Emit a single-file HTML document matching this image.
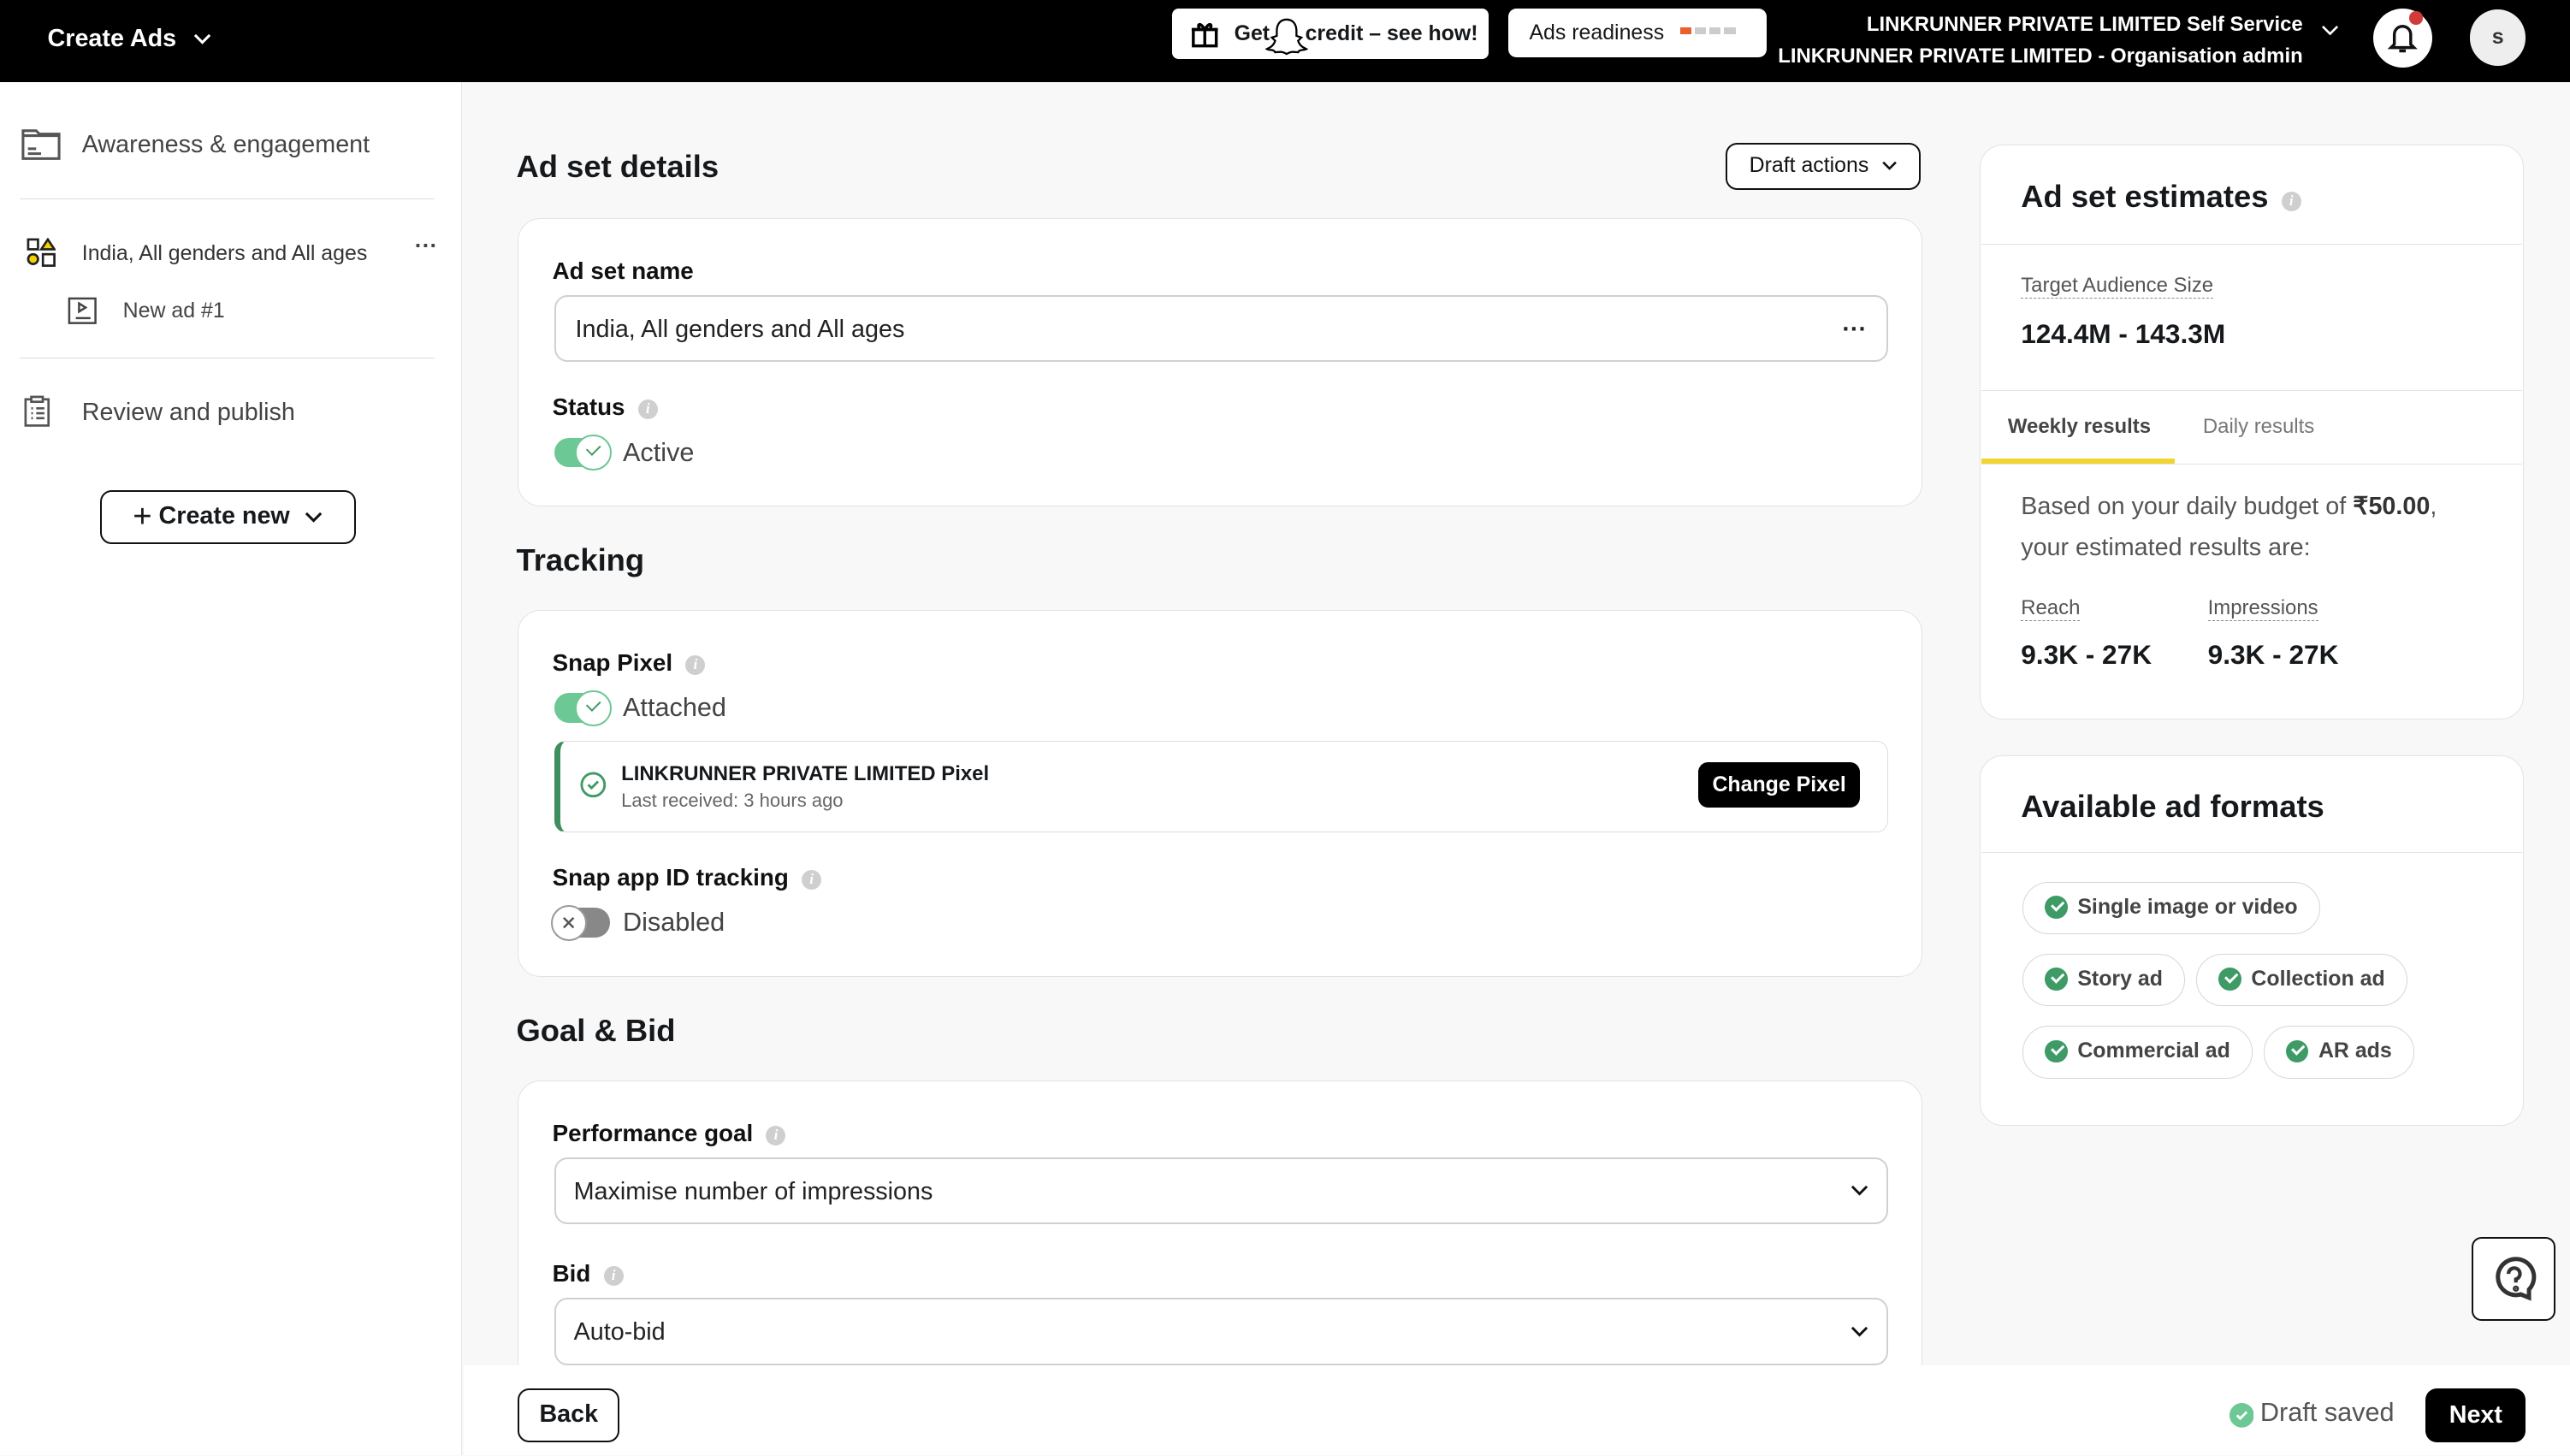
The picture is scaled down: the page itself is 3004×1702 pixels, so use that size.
<!DOCTYPE html>
<html><head><meta charset="utf-8"><style>
*{box-sizing:border-box;margin:0;padding:0}
html,body{width:3004px;height:1702px;overflow:hidden;background:#f8f8f8}
#w{zoom:1.91582;width:1568px;height:888px;position:relative;font-family:"Liberation Sans",sans-serif;color:#16191c}
.a{position:absolute}
.top{left:0;top:0;width:1568px;height:50px;background:#000}
.side{left:0;top:50px;width:282px;height:838px;background:#fff;border-right:1px solid #e5e5e5}
.card{position:absolute;background:#fff;border:1px solid #e3e3e3;border-radius:14px}
.h{font-weight:bold;font-size:19px}
.lbl{font-weight:bold;font-size:14.5px;color:#111}
.info{display:inline-block;width:12px;height:12px;border-radius:50%;background:#cfcfcf;color:#fff;font-size:9px;text-align:center;line-height:12px;font-style:italic;font-family:"Liberation Serif",serif;font-weight:bold;vertical-align:1px;margin-left:8px}
.inp{position:absolute;border:1.5px solid #d0d0d0;border-radius:8px;background:#fff;font-size:15px;color:#222}
.tog{position:absolute;width:34px;height:18px;border-radius:9px;background:#6cc894}
.knob{position:absolute;width:22px;height:22px;border-radius:50%;background:#fff;border:1.5px solid #6cc894}
.knob::after{content:"";position:absolute;left:6px;top:5px;width:7px;height:4px;border-left:1.4px solid #3e9b65;border-bottom:1.4px solid #3e9b65;transform:rotate(-45deg)}
.chip{position:absolute;height:32px;border:1px solid #d6d6d6;border-radius:16px;font-size:13px;font-weight:bold;color:#444;padding:0 13px 0 33px;line-height:30px}
.chip::before{content:"";position:absolute;left:13px;top:8px;width:14px;height:14px;border-radius:50%;background:#3e9b65}
.chip::after{content:"";position:absolute;left:17px;top:11px;width:6px;height:3px;border-left:1.6px solid #fff;border-bottom:1.6px solid #fff;transform:rotate(-45deg)}
.dash{border-bottom:1px dashed #888;display:inline-block;line-height:14px}
.btn{position:absolute;border:1.5px solid #111;border-radius:7px;background:#fff;font-weight:bold;font-size:14.5px;text-align:center}
.chev{display:inline-block;vertical-align:middle}
</style></head><body><div id="w">
<div class="a top"></div>
<div class="a" style="left:29px;top:15px;color:#fff;font-weight:bold;font-size:15px">Create Ads <svg class="chev" style="margin-left:6px" width="11" height="7" viewBox="0 0 11 7" fill="none" stroke="#fff" stroke-width="1.6"><path d="M1 1l4.5 4.5L10 1"/></svg></div>
<div class="a" style="left:715px;top:5px;width:193px;height:31px;background:#fff;border-radius:4px;font-weight:bold;font-size:13px;line-height:31px;padding-left:38px">Get&nbsp;&nbsp;&nbsp;&nbsp;&nbsp;&nbsp;credit – see how!</div>
<svg class="a" style="left:726px;top:12px" width="18" height="18" viewBox="0 0 18 18" fill="none" stroke="#000" stroke-width="1.8"><rect x="2" y="6" width="14" height="10"/><path d="M1 6h16M9 6v10M9 6C6 1 4 3 6 6M9 6c3-5 5-3 3 0"/></svg>
<svg class="a" style="left:772px;top:10px" width="26" height="26" viewBox="0 0 26 26"><path d="M13 2c4 0 6 3 6 7v3l3 1-2 2c1 3 3 4 5 5-2 1-4 0-5 2-2 0-4-1-7 1-3-2-5-1-7-1-1-2-3-1-5-2 2-1 4-2 5-5l-2-2 3-1V9c0-4 2-7 6-7z" fill="#fff" stroke="#000" stroke-width="1.2"/></svg>
<div class="a" style="left:920px;top:5px;width:158px;height:30px;background:#fff;border-radius:5px;font-size:13px;line-height:30px;padding-left:13px">Ads readiness <span style="display:inline-block;width:7px;height:4px;background:#e8602a;margin-left:6px;vertical-align:3px"></span><span style="display:inline-block;width:7px;height:4px;background:#ccc;margin-left:2px;vertical-align:3px"></span><span style="display:inline-block;width:7px;height:4px;background:#ccc;margin-left:2px;vertical-align:3px"></span><span style="display:inline-block;width:7px;height:4px;background:#ccc;margin-left:2px;vertical-align:3px"></span></div>
<div class="a" style="right:163px;top:6px;color:#fff;font-weight:bold;font-size:12.5px;text-align:right;line-height:19px">LINKRUNNER PRIVATE LIMITED Self Service<br>LINKRUNNER PRIVATE LIMITED - Organisation admin</div>
<svg class="a" style="left:1416px;top:15px" width="11" height="7" viewBox="0 0 11 7" fill="none" stroke="#fff" stroke-width="1.4"><path d="M1 1l4.5 4.5L10 1"/></svg>
<div class="a" style="left:1448px;top:5px;width:36px;height:36px;border-radius:50%;background:#fff"></div>
<svg class="a" style="left:1457px;top:13px" width="18" height="20" viewBox="0 0 18 20" fill="none" stroke="#111" stroke-width="1.8"><path d="M4 14V8a5 5 0 0 1 10 0v6l2 2H2zM7 18h4"/></svg>
<div class="a" style="left:1470px;top:7px;width:8px;height:8px;border-radius:50%;background:#d33b3b"></div>
<div class="a" style="left:1507px;top:6px;width:34px;height:34px;border-radius:50%;background:#eee;text-align:center;line-height:34px;font-weight:bold;font-size:13px;color:#333">s</div>

<div class="a side"></div>
<svg class="a" style="left:13px;top:78px" width="24" height="20" viewBox="0 0 24 20" fill="none" stroke="#555" stroke-width="1.6"><path d="M1 2h8l2 2h12v15H1zM1 5h22M4 13h5M4 16h8"/></svg>
<div class="a" style="left:50px;top:80px;font-size:15px;color:#444">Awareness &amp; engagement</div>
<div class="a" style="left:12px;top:121px;width:253px;border-top:1px solid #ddd"></div>
<svg class="a" style="left:16px;top:145px" width="18" height="18" viewBox="0 0 18 18" fill="none" stroke="#222" stroke-width="1.4"><rect x="1" y="1" width="6" height="6"/><path d="M13 1l4 6h-8z" fill="#f2d200"/><circle cx="4" cy="13" r="3" fill="#f2d200"/><rect x="10" y="10" width="7" height="7"/></svg>
<div class="a" style="left:50px;top:147px;font-size:13px;color:#333">India, All genders and All ages</div>
<div class="a" style="left:253px;top:142px;font-size:14px;font-weight:bold;color:#444">···</div>
<svg class="a" style="left:41px;top:181px" width="18" height="17" viewBox="0 0 18 17" fill="none" stroke="#444" stroke-width="1.3"><rect x="1" y="1" width="16" height="15"/><path d="M7 4v5l4-2.5zM5 13h9"/></svg>
<div class="a" style="left:75px;top:182px;font-size:13px;color:#444">New ad #1</div>
<div class="a" style="left:12px;top:218px;width:253px;border-top:1px solid #ddd"></div>
<svg class="a" style="left:14px;top:241px" width="18" height="20" viewBox="0 0 18 20" fill="none" stroke="#555" stroke-width="1.4"><rect x="1.5" y="2.5" width="14" height="16"/><rect x="5" y="1" width="7" height="3" fill="#fff"/><path d="M5 8h1M8 8h5M5 11h1M8 11h5M5 14h1M8 14h5"/></svg>
<div class="a" style="left:50px;top:243px;font-size:15px;color:#444">Review and publish</div>
<div class="btn" style="left:61px;top:299px;width:156px;height:33px;line-height:30px;font-size:15px"><span style="font-size:20px;font-weight:normal;vertical-align:-2px">+</span> Create new <svg class="chev" style="margin-left:5px" width="11" height="7" viewBox="0 0 11 7" fill="none" stroke="#111" stroke-width="1.6"><path d="M1 1l4.5 4.5L10 1"/></svg></div>

<div class="a h" style="left:315px;top:91px">Ad set details</div>
<div class="btn" style="left:1053px;top:87px;width:119px;height:29px;line-height:26px;font-size:13px;font-weight:normal;color:#111">Draft actions <svg class="chev" style="margin-left:4px" width="10" height="6" viewBox="0 0 11 7" fill="none" stroke="#111" stroke-width="1.6"><path d="M1 1l4.5 4.5L10 1"/></svg></div>
<div class="card" style="left:316px;top:133px;width:857px;height:176px"></div>
<div class="a lbl" style="left:337px;top:157px">Ad set name</div>
<div class="inp" style="left:338px;top:180px;width:814px;height:41px;padding:12px 12px;line-height:16px">India, All genders and All ages<span style="float:right;font-weight:bold">···</span></div>
<div class="a lbl" style="left:337px;top:240px">Status<span class="info">i</span></div>
<div class="tog" style="left:338px;top:267px"></div><div class="knob" style="left:351px;top:265px"></div>
<div class="a" style="left:380px;top:267px;font-size:16px;color:#444">Active</div>

<div class="a h" style="left:315px;top:331px">Tracking</div>
<div class="card" style="left:316px;top:372px;width:857px;height:224px"></div>
<div class="a lbl" style="left:337px;top:396px">Snap Pixel<span class="info">i</span></div>
<div class="tog" style="left:338px;top:423px"></div><div class="knob" style="left:351px;top:421px"></div>
<div class="a" style="left:380px;top:423px;font-size:16px;color:#444">Attached</div>
<div class="a" style="left:338px;top:452px;width:814px;height:56px;border:1px solid #ddd;border-left:4px solid #3e8e5e;border-radius:7px;background:#fff"></div>
<svg class="a" style="left:354px;top:471px" width="16" height="16" viewBox="0 0 16 16" fill="none" stroke="#3e9b65" stroke-width="1.5"><circle cx="8" cy="8" r="7"/><path d="M5 8l2 2 4-4"/></svg>
<div class="a" style="left:379px;top:465px;font-size:12.5px;font-weight:bold">LINKRUNNER PRIVATE LIMITED Pixel</div>
<div class="a" style="left:379px;top:482px;font-size:11.5px;color:#666">Last received: 3 hours ago</div>
<div class="a" style="left:1036px;top:465px;width:99px;height:28px;background:#000;color:#fff;border-radius:6px;font-size:13px;font-weight:bold;text-align:center;line-height:28px">Change Pixel</div>
<div class="a lbl" style="left:337px;top:527px">Snap app ID tracking<span class="info">i</span></div>
<div class="a" style="left:338px;top:554px;width:34px;height:18px;border-radius:9px;background:#888"></div>
<div class="a" style="left:336px;top:552px;width:22px;height:22px;border-radius:50%;background:#fff;border:1.5px solid #999"></div>
<svg class="a" style="left:343px;top:559px" width="8" height="8" viewBox="0 0 8 8" stroke="#555" stroke-width="1.3"><path d="M1 1l6 6M7 1L1 7"/></svg>
<div class="a" style="left:380px;top:554px;font-size:16px;color:#444">Disabled</div>

<div class="a h" style="left:315px;top:618px">Goal &amp; Bid</div>
<div class="card" style="left:316px;top:659px;width:857px;height:200px"></div>
<div class="a lbl" style="left:337px;top:683px">Performance goal<span class="info">i</span></div>
<div class="inp" style="left:338px;top:706px;width:814px;height:41px;padding:12px 11px;line-height:16px">Maximise number of impressions<svg style="float:right;margin-top:4px" width="11" height="7" viewBox="0 0 11 7" fill="none" stroke="#111" stroke-width="1.5"><path d="M1 1l4.5 4.5L10 1"/></svg></div>
<div class="a lbl" style="left:337px;top:769px">Bid<span class="info">i</span></div>
<div class="inp" style="left:338px;top:792px;width:814px;height:41px;padding:12px 11px;line-height:16px">Auto-bid<svg style="float:right;margin-top:4px" width="11" height="7" viewBox="0 0 11 7" fill="none" stroke="#111" stroke-width="1.5"><path d="M1 1l4.5 4.5L10 1"/></svg></div>

<div class="card" style="left:1208px;top:88px;width:332px;height:351px"></div>
<div class="a h" style="left:1233px;top:109px">Ad set estimates<span class="info">i</span></div>
<div class="a" style="left:1209px;top:149px;width:330px;border-top:1px solid #e3e3e3"></div>
<div class="a" style="left:1233px;top:167px;font-size:12.5px;color:#555"><span class="dash">Target Audience Size</span></div>
<div class="a" style="left:1233px;top:194px;font-size:16.5px;font-weight:bold">124.4M - 143.3M</div>
<div class="a" style="left:1209px;top:238px;width:330px;border-top:1px solid #e3e3e3"></div>
<div class="a" style="left:1225px;top:253px;font-size:12.5px;font-weight:bold;color:#444">Weekly results</div>
<div class="a" style="left:1344px;top:253px;font-size:12.5px;color:#777">Daily results</div>
<div class="a" style="left:1209px;top:283px;width:330px;border-top:1px solid #e3e3e3"></div>
<div class="a" style="left:1209px;top:280px;width:118px;height:3px;background:#f2d530"></div>
<div class="a" style="left:1233px;top:297px;font-size:15px;color:#555;line-height:25px">Based on your daily budget of <b style="color:#333">₹50.00</b>,<br>your estimated results are:</div>
<div class="a" style="left:1233px;top:364px;font-size:12.5px;color:#555"><span class="dash">Reach</span></div>
<div class="a" style="left:1347px;top:364px;font-size:12.5px;color:#555"><span class="dash">Impressions</span></div>
<div class="a" style="left:1233px;top:390px;font-size:16.5px;font-weight:bold">9.3K - 27K</div>
<div class="a" style="left:1347px;top:390px;font-size:16.5px;font-weight:bold">9.3K - 27K</div>

<div class="card" style="left:1208px;top:461px;width:332px;height:226px"></div>
<div class="a h" style="left:1233px;top:481px">Available ad formats</div>
<div class="a" style="left:1209px;top:520px;width:330px;border-top:1px solid #e3e3e3"></div>
<div class="chip" style="left:1234px;top:538px">Single image or video</div>
<div class="chip" style="left:1234px;top:582px">Story ad</div>
<div class="chip" style="left:1340px;top:582px">Collection ad</div>
<div class="chip" style="left:1234px;top:626px">Commercial ad</div>
<div class="chip" style="left:1381px;top:626px">AR ads</div>

<div class="a" style="left:1508px;top:755px;width:51px;height:51px;border:1.5px solid #111;border-radius:6px;background:#fff"></div>
<svg class="a" style="left:1520px;top:767px" width="28" height="28" viewBox="0 0 28 28" fill="none" stroke="#333" stroke-width="2.6"><path d="M23 20a11 11 0 1 0-5 3l5 2z"/><path d="M10.5 10.5a3.5 3.5 0 1 1 4.5 3.3v2" stroke-width="2.2"/><circle cx="15" cy="19.5" r="0.6" fill="#333"/></svg>

<div class="a" style="left:283px;top:833px;width:1285px;height:55px;background:#fff"></div>
<div class="btn" style="left:316px;top:847px;width:62px;height:33px;line-height:30px;font-size:15px">Back</div>
<svg class="a" style="left:1360px;top:856px" width="15" height="15" viewBox="0 0 15 15"><circle cx="7.5" cy="7.5" r="7.5" fill="#6cc894"/><path d="M4.5 7.5l2 2 4-4" fill="none" stroke="#fff" stroke-width="1.5"/></svg>
<div class="a" style="left:1379px;top:853px;font-size:16px;color:#555">Draft saved</div>
<div class="a" style="left:1480px;top:847px;width:61px;height:33px;background:#000;color:#fff;border-radius:7px;text-align:center;line-height:33px;font-weight:bold;font-size:15px">Next</div>
</div></body></html>
